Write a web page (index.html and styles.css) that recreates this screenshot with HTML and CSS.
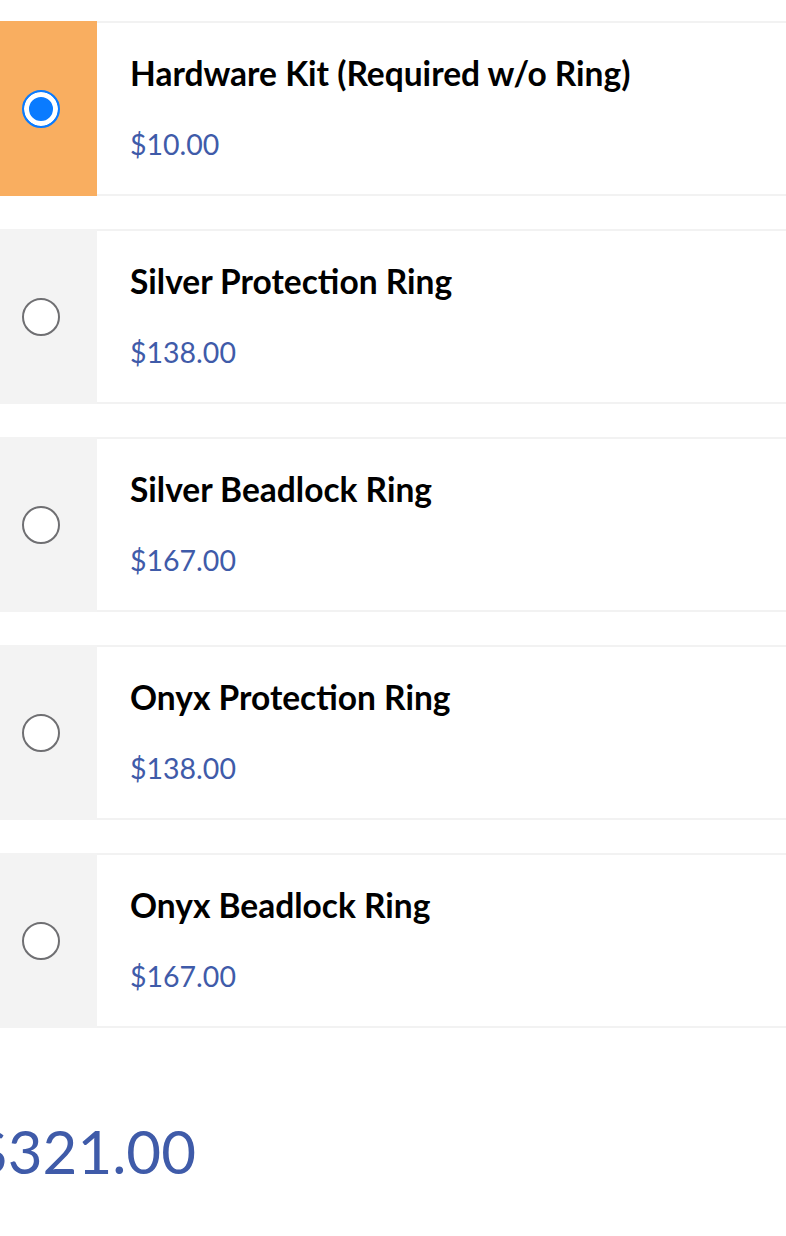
FILE: index.html
```
<!DOCTYPE html>
<html lang="en">
<head>
  <meta charset="UTF-8">
  <meta name="viewport" content="width=device-width, initial-scale=1.0">
  <title>Wheel Options</title>
  <link rel="stylesheet" href="styles.css">
</head>
<body>

  <!-- Option list -->
  <div class="options">
    <label class="option selected">
      <div class="option-check"><span class="radio"></span></div>
      <div class="option-info">
        <div class="option-name">Hardware Kit (Required w/o Ring)</div>
        <div class="option-price">$10.00</div>
      </div>
    </label>

    <label class="option">
      <div class="option-check"><span class="radio"></span></div>
      <div class="option-info">
        <div class="option-name">Silver Protection Ring</div>
        <div class="option-price">$138.00</div>
      </div>
    </label>

    <label class="option">
      <div class="option-check"><span class="radio"></span></div>
      <div class="option-info">
        <div class="option-name">Silver Beadlock Ring</div>
        <div class="option-price">$167.00</div>
      </div>
    </label>

    <label class="option">
      <div class="option-check"><span class="radio"></span></div>
      <div class="option-info">
        <div class="option-name">Onyx Protection Ring</div>
        <div class="option-price">$138.00</div>
      </div>
    </label>

    <label class="option">
      <div class="option-check"><span class="radio"></span></div>
      <div class="option-info">
        <div class="option-name">Onyx Beadlock Ring</div>
        <div class="option-price">$167.00</div>
      </div>
    </label>
  </div>

  <!-- Total -->
  <div class="total">$321.00</div>

</body>
</html>
```

FILE: styles.css
```
body {
  margin: 0;
  background-color: #fff;
  font-family: Lato, "Noto Sans", sans-serif;
  color: #000;
  overflow: hidden;
}

.options {
  display: flex;
  flex-direction: column;
  gap: 33px;
  padding-top: 21px;
}

/* One option card */
.option {
  display: flex;
  height: 171px;
  border-top: 2px solid #f2f2f2;
  border-bottom: 2px solid #f2f2f2;
  cursor: pointer;
}

.option-check {
  width: 97px;
  margin: -2px 0; /* grey column covers the borders too */
  background-color: #f3f3f3;
  display: flex;
  align-items: center;
  padding-left: 22px;
  box-sizing: border-box;
}

.option.selected .option-check {
  background-color: #f9ae60;
}

.radio {
  width: 38px;
  height: 38px;
  border-radius: 50%;
  border: 2px solid #6f6f72;
  background-color: #fff;
  box-sizing: border-box;
}

.option.selected .radio {
  border-color: #0a7bff;
  background-color: #0a7bff;
  box-shadow: inset 0 0 0 5px #fff;
}

.option-info {
  flex: 1;
  padding: 30px 0 0 33px;
}

.option-name {
  font-size: 33.5px;
  font-weight: 700;
  line-height: 40px;
}

.option-price {
  margin-top: 34px;
  font-size: 28.5px;
  line-height: 34px;
  color: #3f5ba9;
}

/* Order total */
.total {
  margin-top: 87px;
  margin-left: -27px;
  font-size: 60px;
  line-height: 72px;
  color: #3f5ba9;
}
```
